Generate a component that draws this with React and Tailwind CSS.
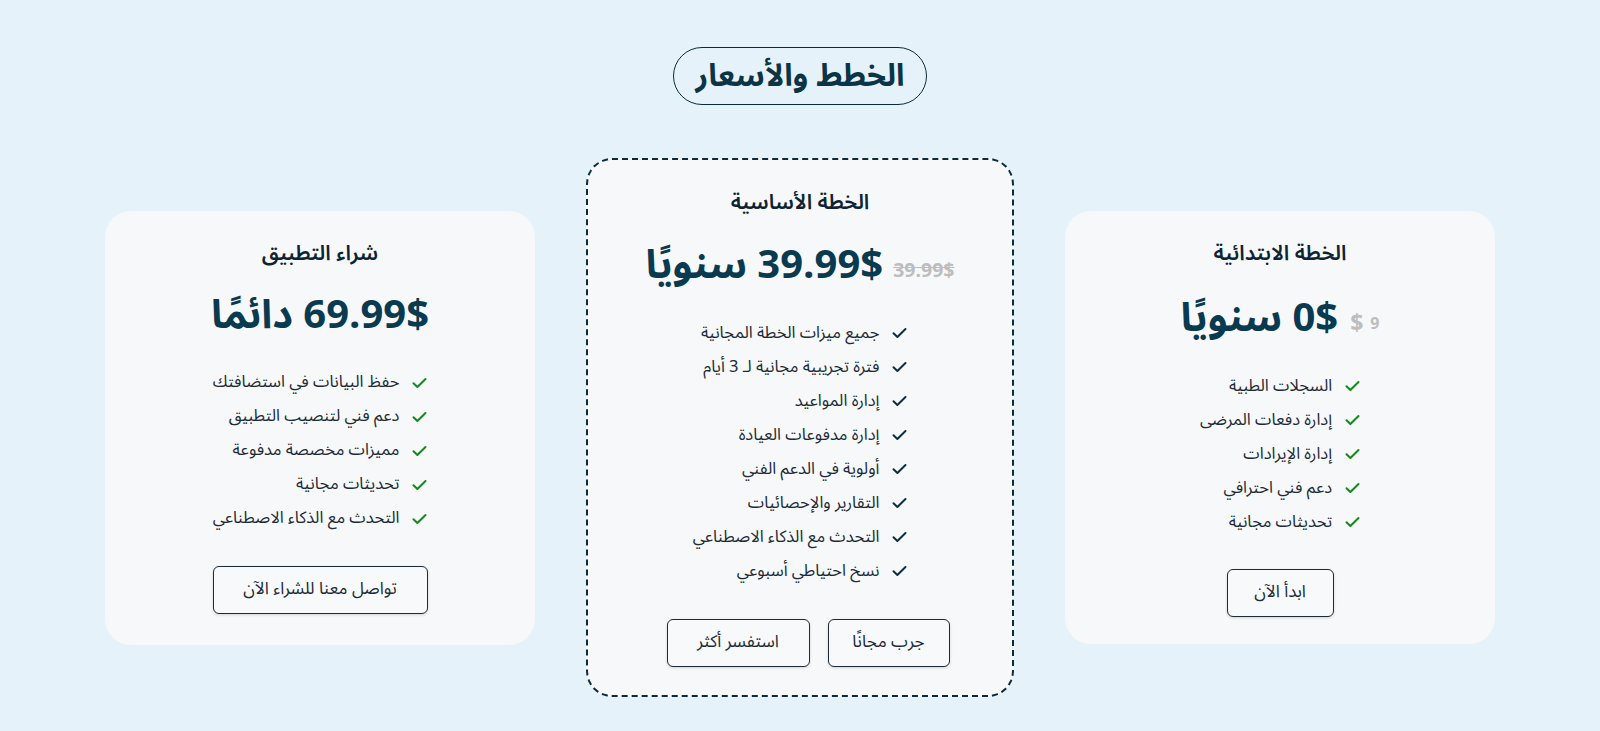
import React from "react";

const font = { fontFamily: '"Noto Sans Arabic", "Noto Kufi Arabic", "DejaVu Sans", sans-serif' };

function Check({ color }) {
  return (
    <svg width="15" height="12" viewBox="0 0 15 12" fill="none" className="shrink-0">
      <path d="M1.5 6.2 L5.4 10 L13.5 2" stroke={color} strokeWidth="2" strokeLinecap="round" strokeLinejoin="round" />
    </svg>
  );
}

function Features({ items, color }) {
  return (
    <ul className="mt-[30px] flex flex-col items-start">
      {items.map((t) => (
        <li key={t} className="flex h-[34px] items-center gap-[13px] text-[16.5px] text-[#1c2b36]">
          <Check color={color} />
          <span>{t}</span>
        </li>
      ))}
    </ul>
  );
}

function Btn({ children, w }) {
  return (
    <button className={`h-[48px] ${w} rounded-[6px] border-[1.5px] border-[#1e2a36] bg-[#f7f9fb] text-[17px] text-[#1c2b36] shadow-[0_1px_3px_rgba(0,0,0,0.15)]`}>
      {children}
    </button>
  );
}

export default function App() {
  const green = "#14891c";
  const dark = "#0d2f42";
  return (
    <div dir="rtl" style={font} className="min-h-[731px] w-full bg-[#e6f2f9] flex flex-col items-center">
      <div className="mt-[47px] h-[58px] px-[22px] flex items-center rounded-full border-[1.5px] border-[#0d2a3a] text-[31px] font-bold text-[#0c3447]">
        الخطط والأسعار
      </div>
      <div className="mt-[53px] flex items-center gap-[51px]">
        {/* Right card */}
        <div className="w-[430px] rounded-[26px] bg-[#f6f8fa] pt-[28px] pb-[27px] flex flex-col items-center">
          <div className="h-[28px] leading-[28px] text-[21px] font-semibold text-[#0f2433]">الخطة الابتدائية</div>
          <div className="mt-[32px] h-[40px] flex items-center gap-[12px]">
            <span className="flex items-center gap-[7px] font-bold text-[#bdbdbd] mt-[10px]">
              <span className="text-[16px]">9</span>
              <span className="text-[23px]">$</span>
            </span>
            <span className="text-[40px] leading-[40px] font-bold text-[#0a3a4f]">0$ سنويًا</span>
          </div>
          <Features color={green} items={["السجلات الطبية", "إدارة دفعات المرضى", "إدارة الإيرادات", "دعم فني احترافي", "تحديثات مجانية"]} />
          <div className="mt-[30px]">
            <Btn w="w-[107px]">ابدأ الآن</Btn>
          </div>
        </div>

        {/* Middle card */}
        <div className="w-[428px] rounded-[26px] border-2 border-dashed border-[#0d2a3a] bg-[#f6f8fa] pt-[28px] pb-[28px] flex flex-col items-center">
          <div className="h-[28px] leading-[28px] text-[21px] font-semibold text-[#0f2433]">الخطة الأساسية</div>
          <div className="mt-[30px] h-[40px] flex items-center gap-[10px]">
            <span className="text-[19.5px] font-bold text-[#bdbdbd] line-through mt-[10px]">39.99$</span>
            <span className="text-[40px] leading-[40px] font-bold text-[#0a3a4f]">39.99$ سنويًا</span>
          </div>
          <Features color={dark} items={["جميع ميزات الخطة المجانية", "فترة تجريبية مجانية لـ 3 أيام", "إدارة المواعيد", "إدارة مدفوعات العيادة", "أولوية في الدعم الفني", "التقارير والإحصائيات", "التحدث مع الذكاء الاصطناعي", "نسخ احتياطي أسبوعي"]} />
          <div className="mt-[31px] pl-[16px] flex gap-[18px]">
            <Btn w="w-[122px]">جرب مجانًا</Btn>
            <Btn w="w-[143px]">استفسر أكثر</Btn>
          </div>
        </div>

        {/* Left card */}
        <div className="w-[430px] rounded-[26px] bg-[#f6f8fa] pt-[28px] pb-[27px] flex flex-col items-center">
          <div className="h-[28px] leading-[28px] text-[21px] font-semibold text-[#0f2433]">شراء التطبيق</div>
          <div className="mt-[29px] h-[40px] flex items-center">
            <span className="text-[40px] leading-[40px] font-bold text-[#0a3a4f]">69.99$ دائمًا</span>
          </div>
          <Features color={green} items={["حفظ البيانات في استضافتك", "دعم فني لتنصيب التطبيق", "مميزات مخصصة مدفوعة", "تحديثات مجانية", "التحدث مع الذكاء الاصطناعي"]} />
          <div className="mt-[30px] mb-[4px]">
            <Btn w="w-[215px]">تواصل معنا للشراء الآن</Btn>
          </div>
        </div>
      </div>
    </div>
  );
}
